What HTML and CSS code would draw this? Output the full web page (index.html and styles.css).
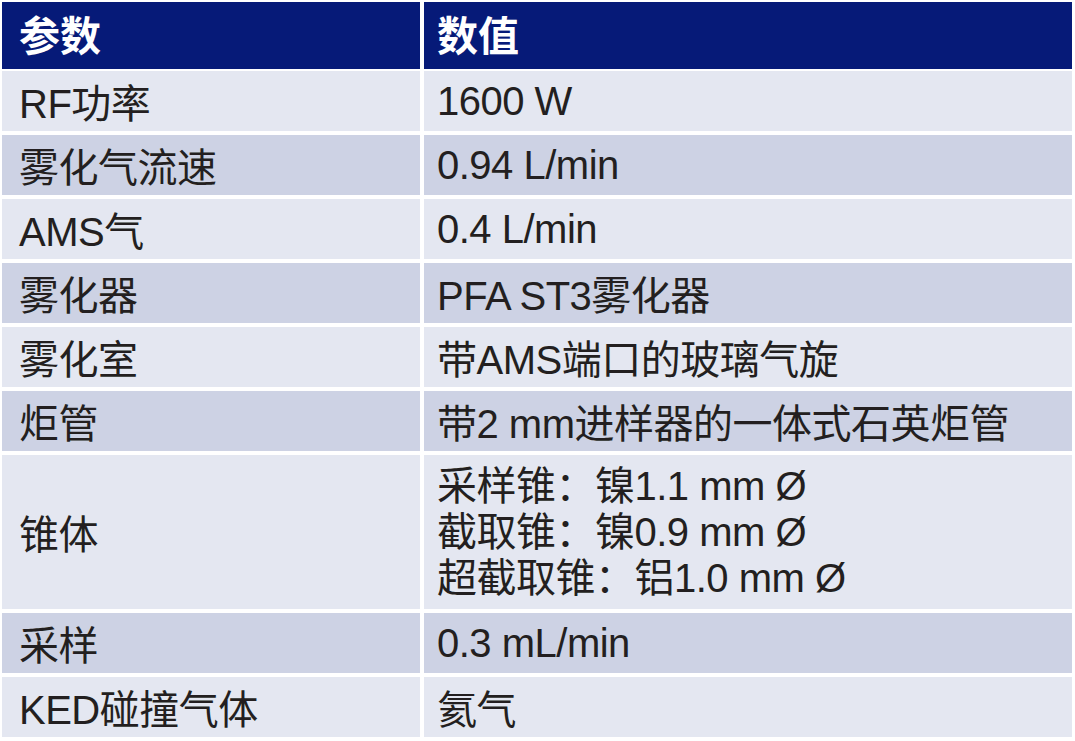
FILE: index.html
```html
<!DOCTYPE html>
<html lang="zh-CN">
<head>
<meta charset="utf-8">
<title>参数</title>
<link rel="stylesheet" href="styles.css">
</head>
<body>
<div class="sheet">
  <div class="grid head-row">
    <div class="cell head key">参数</div>
    <div class="cell head val">数值</div>
  </div>
  <div class="grid body-rows">
    <div class="cell light key">RF功率</div>
    <div class="cell light val">1600 W</div>

    <div class="cell dark key">雾化气流速</div>
    <div class="cell dark val">0.94 L/min</div>

    <div class="cell light key">AMS气</div>
    <div class="cell light val">0.4 L/min</div>

    <div class="cell dark key">雾化器</div>
    <div class="cell dark val">PFA ST3雾化器</div>

    <div class="cell light key">雾化室</div>
    <div class="cell light val">带AMS端口的玻璃气旋</div>

    <div class="cell dark key">炬管</div>
    <div class="cell dark val">带2 mm进样器的一体式石英炬管</div>

    <div class="cell light key">锥体</div>
    <div class="cell light val multi">
      <span>采样锥：镍1.1 mm Ø</span>
      <span>截取锥：镍0.9 mm Ø</span>
      <span>超截取锥：铝1.0 mm Ø</span>
    </div>

    <div class="cell dark key">采样</div>
    <div class="cell dark val">0.3 mL/min</div>

    <div class="cell light key">KED碰撞气体</div>
    <div class="cell light val">氦气</div>
  </div>
</div>
</body>
</html>
```

FILE: styles.css
```css
html, body {
  margin: 0;
  padding: 0;
  background: #ffffff;
}

body {
  font-family: "Liberation Sans", "Noto Sans CJK SC", sans-serif;
  color: #231f20;
}

.sheet {
  padding: 2px 0 0 2px;
}

.grid {
  display: grid;
  grid-template-columns: 418px 648px;
  column-gap: 4px;
}

.head-row {
  grid-template-rows: 67px;
  margin-bottom: 2px;
}

.body-rows {
  grid-template-rows: repeat(6, 60px) 154px 60px 60px;
  row-gap: 4px;
}

.cell {
  display: flex;
  align-items: center;
  font-size: 40px;
  letter-spacing: -0.5px;
  white-space: nowrap;
}

.key {
  padding-left: 17px;
}

.val {
  padding-left: 13px;
}

.head {
  background: #061a78;
  color: #ffffff;
  font-weight: bold;
  font-size: 41px;
  letter-spacing: 0;
  padding-bottom: 5px;
  box-sizing: border-box;
}

.light {
  background: #e4e7f1;
}

.dark {
  background: #cdd2e4;
}

.multi {
  flex-direction: column;
  align-items: flex-start;
  justify-content: center;
  line-height: 46px;
}
```
